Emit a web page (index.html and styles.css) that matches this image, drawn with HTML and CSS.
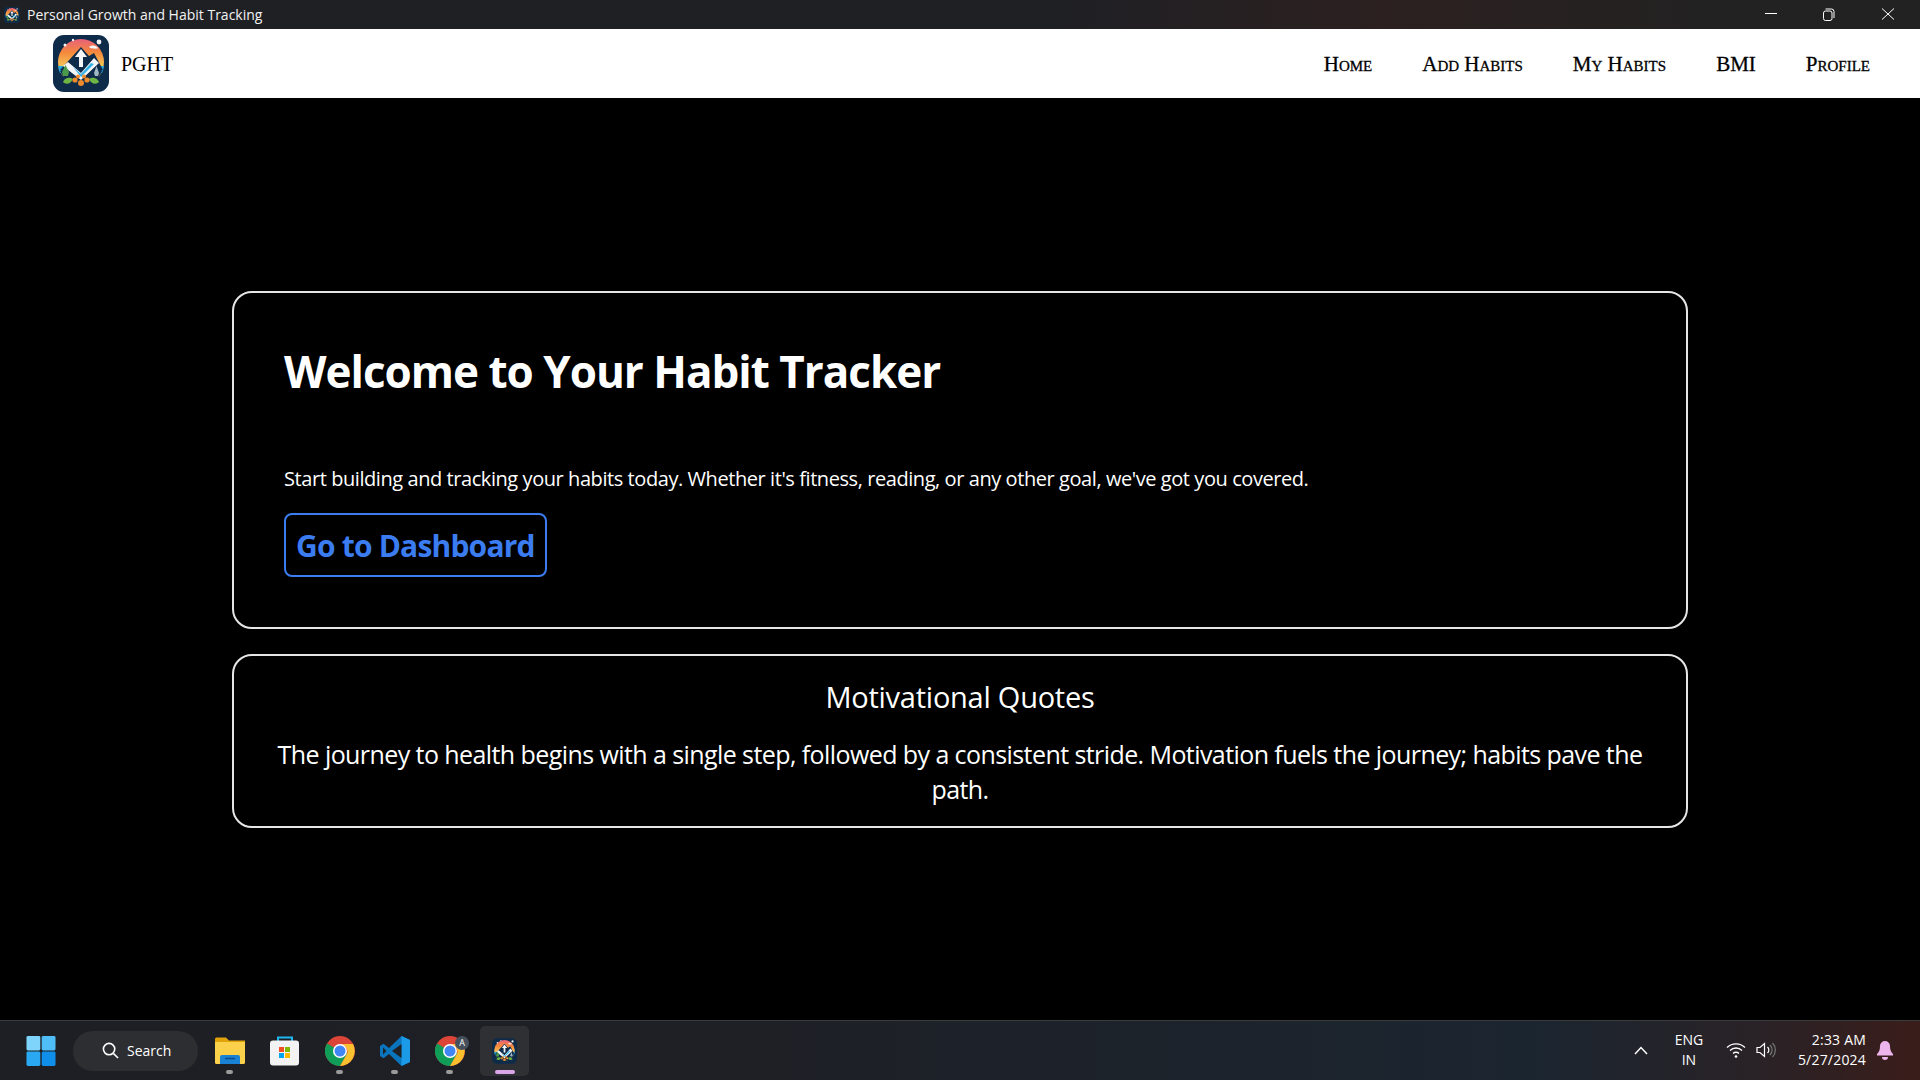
FILE: index.html
```html
<!DOCTYPE html>
<html lang="en">
<head>
    <meta charset="UTF-8">
    <meta name="viewport" content="width=device-width, initial-scale=1.0">
    <title>Personal Growth and Habit Tracking</title>
    <link rel="stylesheet" href="styles.css">
</head>
<body>
    <svg class="defs-holder" width="0" height="0">
        <defs>
            <linearGradient id="sunGrad" x1="0" y1="0" x2="0" y2="1">
                <stop offset="0" stop-color="#e8607a"/>
                <stop offset="0.3" stop-color="#f58a3c"/>
                <stop offset="0.6" stop-color="#f7c65a"/>
            </linearGradient>
            <symbol id="appLogo" viewBox="0 0 56 57">
                <rect width="56" height="57" rx="11" fill="#0e2b4a"/>
                <circle cx="28" cy="27" r="23" fill="url(#sunGrad)"/>
                <path d="M5 31h46a23 23 0 0 1-2 7H7a23 23 0 0 1-2-7z" fill="#2aa7dc"/>
                <path d="M7 36h42l-8 14H15z" fill="#0e2b4a"/>
                <path d="M7 35L28 12l8 9 5-3 9 17-22 11z" fill="#0e2b4a"/>
                <path d="M15 27l13 11 13-15 5 5-18 17-18-14z" fill="#f4f6f8"/>
                <path d="M20 32l8 7 10-11 3 1-13 13z" fill="#35b3e8"/>
                <path d="M28 14l-6 8h4v10h4V22h4z" fill="#f4f6f8"/>
                <path d="M36 12c3-2 6-2 9 1 1 1-8 1-9-1z" fill="#f4f6f8"/>
                <path d="M10 47c2-5 7-5 10-3-2 5-7 6-10 3zM46 47c-2-5-7-5-10-3 2 5 7 6 10 3z" fill="#6fb544"/>
                <path d="M9 37l3.500-7 3.500 7-1 4h-5z" fill="#4a9a4c"/>
                <path d="M41 38l2.500-7 2.500 7-1 3h-3z" fill="#9fb8c4"/>
                <circle cx="22" cy="45" r="2.600" fill="#ee8a2c"/>
                <circle cx="28" cy="48" r="3" fill="#ee8a2c"/>
                <circle cx="34" cy="45" r="2.600" fill="#ee8a2c"/>
                <circle cx="25" cy="41.500" r="2" fill="#ee8a2c"/>
                <circle cx="31" cy="41.500" r="2" fill="#ee8a2c"/>
                <circle cx="46" cy="7" r="2.400" fill="#f0f2f4"/>
                <circle cx="12" cy="10" r="1.500" fill="#f0f2f4"/>
                <circle cx="20" cy="5" r="1.200" fill="#f0f2f4"/>
            </symbol>
            <symbol id="chromeIcon" viewBox="0 0 30 30">
                <circle cx="15" cy="15" r="15" fill="#db4437"/>
                <path d="M15 15L2 7.500A15 15 0 0 0 15 30l7.500-13z" fill="#0f9d58"/>
                <path d="M15 8h13a15 15 0 0 1-13 22l7.500-13A8 8 0 0 0 15 8z" fill="#fbc02d"/>
                <circle cx="15" cy="15" r="7" fill="#fff"/>
                <circle cx="15" cy="15" r="5.500" fill="#4285f4"/>
            </symbol>
        </defs>
    </svg>

    <div class="title-bar">
        <div class="title-left">
            <svg class="title-icon"><use href="#appLogo"/></svg>
            <span>Personal Growth and Habit Tracking</span>
        </div>
        <div class="window-controls">
            <svg class="win-btn" viewBox="0 0 58 29"><path d="M22 13.500h12" stroke="#fff" stroke-width="1"/></svg>
            <svg class="win-btn" viewBox="0 0 58 29" fill="none" stroke="#fff" stroke-width="1">
                <rect x="22.500" y="11" width="8.500" height="9.500" rx="2"/>
                <path d="M24.500 9h6a2.500 2.500 0 0 1 2.500 2.500V18"/>
            </svg>
            <svg class="win-btn" viewBox="0 0 58 29"><path d="M23 8.500l12 11M35 8.500l-12 11" stroke="#fff" stroke-width="1"/></svg>
        </div>
    </div>

    <nav class="navbar-container">
        <div class="nav-left">
            <svg class="nav-logo"><use href="#appLogo"/></svg>
            <span class="brand">PGHT</span>
        </div>
        <div class="nav-right">
            <a href="#">Home</a>
            <a href="#">Add Habits</a>
            <a href="#">My Habits</a>
            <a href="#">BMI</a>
            <a href="#">Profile</a>
        </div>
    </nav>

    <main class="container">
        <section class="card welcome-card">
            <h1>Welcome to Your Habit Tracker</h1>
            <p>Start building and tracking your habits today. Whether it's fitness, reading, or any other goal, we've got you covered.</p>
            <a href="#" class="dash-btn">Go to Dashboard</a>
        </section>
        <section class="card quote-card">
            <h3>Motivational Quotes</h3>
            <p>The journey to health begins with a single step, followed by a consistent stride. Motivation fuels the journey; habits pave the path.</p>
        </section>
    </main>

    <footer class="taskbar">
        <div class="task-left">
            <svg class="start-icon" viewBox="0 0 30 31">
                <rect width="14.300" height="15" rx="1.500" fill="#7fd4fb"/>
                <rect x="15.700" width="14.300" height="15" rx="1.500" fill="#4fbdf6"/>
                <rect y="16" width="14.300" height="15" rx="1.500" fill="#2aa9f2"/>
                <rect x="15.700" y="16" width="14.300" height="15" rx="1.500" fill="#0f8eea"/>
            </svg>
            <div class="search-pill">
                <svg class="search-icon" viewBox="0 0 18 18" fill="none" stroke="#fff" stroke-width="1.700">
                    <circle cx="7.500" cy="7.500" r="6"/>
                    <path d="M12 12l5 5"/>
                </svg>
                <span>Search</span>
            </div>
            <div class="task-apps">
                <div class="task-app running">
                    <svg viewBox="0 0 30 30">
                        <path d="M0 3a1.500 1.500 0 0 1 1.500-1.500H11l3 3h16V27H0z" fill="#e0a30c"/>
                        <path d="M0 6h30v20.500a1.500 1.500 0 0 1-1.500 1.500h-27A1.500 1.500 0 0 1 0 26.500z" fill="#fbd14b"/>
                        <path d="M5 21a2 2 0 0 1 2-2h16a2 2 0 0 1 2 2v7H5z" fill="#1a82d4"/>
                        <path d="M10 22.500h10" stroke="#0b4d8c" stroke-width="1.500"/>
                    </svg>
                </div>
                <div class="task-app">
                    <svg viewBox="0 0 30 30">
                        <path d="M8 5V1.500h14V5" fill="none" stroke="#1fb6ee" stroke-width="2"/>
                        <rect y="4.500" width="29" height="25" rx="3" fill="#f3f3f3"/>
                        <rect x="9" y="11" width="5" height="5" fill="#f25022"/>
                        <rect x="15" y="11" width="5" height="5" fill="#7fba00"/>
                        <rect x="9" y="17" width="5" height="5" fill="#00a4ef"/>
                        <rect x="15" y="17" width="5" height="5" fill="#ffb900"/>
                    </svg>
                </div>
                <div class="task-app running">
                    <svg><use href="#chromeIcon"/></svg>
                </div>
                <div class="task-app running">
                    <svg viewBox="0 0 30 30">
                        <path d="M21.500 0L30 4v22l-8.500 4L9 18l-5.500 4.200L0 20v-10l3.500-2.200L9 12z" fill="#0a74bd"/>
                        <path d="M21.500 0L30 4v22l-8.500 4z" fill="#1b9ae8"/>
                        <path d="M21.500 8v14L12 15z" fill="#1f2125"/>
                        <path d="M3 11.500l3.500 3.500L3 18.500z" fill="#1f2125"/>
                    </svg>
                </div>
                <div class="task-app running">
                    <svg><use href="#chromeIcon"/></svg>
                    <span class="profile-badge">A</span>
                </div>
                <div class="task-app active">
                    <svg class="active-logo"><use href="#appLogo"/></svg>
                </div>
            </div>
        </div>
        <div class="task-right">
            <svg class="tray-chevron" viewBox="0 0 14 9" fill="none" stroke="#fff" stroke-width="1.500"><path d="M1 8l6-6.500L13 8"/></svg>
            <div class="lang"><span>ENG</span><span>IN</span></div>
            <div class="tray-icons">
                <svg viewBox="0 0 20 16" fill="none" stroke="#fff" stroke-width="1.300">
                    <path d="M1 5.500a13 13 0 0 1 18 0M4 8.500a8.500 8.500 0 0 1 12 0M7 11.500a4.200 4.200 0 0 1 6 0"/>
                    <circle cx="10" cy="14.500" r="1.300" fill="#fff" stroke="none"/>
                </svg>
                <svg viewBox="0 0 20 16" fill="none" stroke="#fff" stroke-width="1.200">
                    <path d="M1 5.500h3L8.500 1.500v13L4 10.500H1z"/>
                    <path d="M11.500 5a4 4 0 0 1 0 6"/>
                    <path d="M14 3a7 7 0 0 1 0 10M16.500 1a10 10 0 0 1 0 14" stroke="#777"/>
                </svg>
            </div>
            <div class="clock"><span>2:33 AM</span><span>5/27/2024</span></div>
            <svg class="bell" viewBox="0 0 16 19" fill="#edb4ee">
                <path d="M8 0a5 5 0 0 1 5 5c0 4 1 6 3 8v1.500H0V13c2-2 3-4 3-8a5 5 0 0 1 5-5z"/>
                <path d="M5 16h6a3 3 0 0 1-6 0z"/>
            </svg>
        </div>
    </footer>
</body>
</html>
```

FILE: styles.css
```css
* {
    box-sizing: border-box;
}
body {
    margin: 0;
    height: 100vh;
    display: flex;
    flex-direction: column;
    overflow: hidden;
    background-color: black;
    font-family: "Open Sans", "Noto Sans", sans-serif;
    color: white;
}
.defs-holder {
    position: absolute;
}

.title-bar {
    display: flex;
    justify-content: space-between;
    align-items: center;
    height: 29px;
    flex-shrink: 0;
    background: linear-gradient(90deg, #1f2024 0%, #1f2024 55%, #2c2020 72%, #222222 90%);
}
.title-left {
    display: flex;
    align-items: center;
    gap: 7px;
    padding-left: 4px;
    font-size: 14px;
    color: #f2f2f2;
}
.title-icon {
    width: 16px;
    height: 16px;
}
.window-controls {
    display: flex;
    padding-right: 3px;
}
.win-btn {
    width: 58px;
    height: 29px;
}

.navbar-container {
    display: flex;
    justify-content: space-between;
    align-items: center;
    height: 69px;
    flex-shrink: 0;
    padding: 0 50px 0 53px;
    background-color: white;
    color: black;
    font-family: "Liberation Serif", serif;
}
.nav-left {
    display: flex;
    align-items: center;
    gap: 12px;
}
.nav-logo {
    width: 56px;
    height: 57px;
}
.brand {
    padding-top: 2px;
    font-size: 20px;
}
.nav-right {
    display: flex;
    gap: 50px;
    padding-top: 2px;
}
.nav-right a {
    color: black;
    text-decoration: none;
    font-size: 21px;
    font-variant: small-caps;
    -webkit-text-stroke: 0.3px black;
}

.container {
    flex: 1;
    display: flex;
    flex-direction: column;
    gap: 25px;
    padding: 193px 232px 0;
}
.card {
    border: 2px solid #e6e6e6;
    border-radius: 20px;
}
.welcome-card {
    height: 338px;
    padding: 50px;
}
.welcome-card h1 {
    margin: 0;
    font-size: 44px;
    line-height: 56px;
    font-weight: 700;
    letter-spacing: -1px;
}
.welcome-card p {
    margin: 65px 0 0;
    font-size: 20px;
    line-height: 30px;
    letter-spacing: -0.43px;
}
.dash-btn {
    display: inline-block;
    margin-top: 19px;
    padding: 0 10px;
    height: 64px;
    line-height: 62px;
    border: 2px solid #3b7df0;
    border-radius: 8px;
    color: #3b7df0;
    text-decoration: none;
    font-size: 30px;
    font-weight: 700;
    letter-spacing: -0.8px;
}
.quote-card {
    height: 174px;
    padding: 21px 30px 0;
    text-align: center;
}
.quote-card h3 {
    margin: 0;
    font-size: 29px;
    line-height: 40px;
    font-weight: 400;
    letter-spacing: -0.25px;
}
.quote-card p {
    margin: 20px 0 0;
    font-size: 25px;
    line-height: 35px;
    letter-spacing: -0.58px;
}

.taskbar {
    display: flex;
    justify-content: space-between;
    height: 60px;
    flex-shrink: 0;
    border-top: 1px solid #3a3b3d;
    background: linear-gradient(90deg, #1d1f24 0%, #1e2026 40%, #1b2530 80%, #2a2226 92%, #3a1d1a 100%);
}
.task-left {
    display: flex;
    align-items: center;
    padding-left: 26px;
}
.start-icon {
    width: 30px;
    height: 30px;
}
.search-pill {
    display: flex;
    align-items: center;
    gap: 8px;
    width: 125px;
    height: 40px;
    margin-left: 17px;
    padding-left: 29px;
    border-radius: 20px;
    background-color: #2d2e32;
    font-size: 14px;
}
.search-icon {
    width: 17px;
    height: 17px;
}
.task-apps {
    display: flex;
    margin-left: 7px;
    gap: 6px;
}
.task-app {
    position: relative;
    display: flex;
    align-items: center;
    justify-content: center;
    width: 49px;
    height: 50px;
}
.task-app svg {
    width: 30px;
    height: 30px;
}
.task-app.running::after,
.task-app.active::after {
    content: "";
    position: absolute;
    bottom: 2px;
    left: 21px;
    width: 7px;
    height: 4px;
    border-radius: 2px;
    background-color: #9a9a9a;
}
.task-app.active {
    border-radius: 5px;
    background-color: #2e3034;
}
.task-app.active::after {
    left: 15px;
    width: 20px;
    background-color: #dba6e8;
}
.task-app .active-logo {
    width: 25px;
    height: 26px;
}
.profile-badge {
    position: absolute;
    top: 10px;
    right: 5px;
    width: 14px;
    height: 14px;
    border-radius: 50%;
    background-color: #45505c;
    font-size: 9px;
    line-height: 14px;
    text-align: center;
}

.task-right {
    display: flex;
    align-items: center;
    padding: 0 27px 1px 0;
}
.tray-chevron {
    width: 14px;
    height: 9px;
}
.lang {
    display: flex;
    flex-direction: column;
    align-items: center;
    width: 28px;
    margin-left: 27px;
    font-size: 14px;
    line-height: 20px;
}
.tray-icons {
    display: flex;
    gap: 10px;
    margin-left: 23px;
}
.tray-icons svg {
    width: 20px;
    height: 16px;
}
.clock {
    display: flex;
    flex-direction: column;
    align-items: flex-end;
    margin-left: 22px;
    font-size: 14px;
    line-height: 20px;
    letter-spacing: 0.2px;
}
.bell {
    width: 16px;
    height: 19px;
    margin-left: 11px;
}
```
